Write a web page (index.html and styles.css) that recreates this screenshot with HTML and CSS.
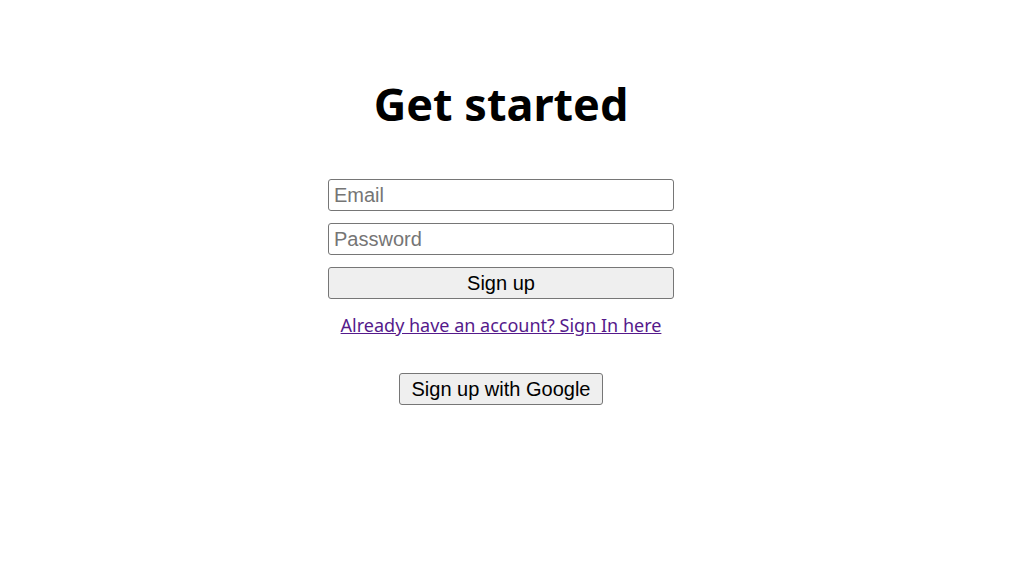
FILE: index.html
```html
<!DOCTYPE html>
<html>
<head>
<meta charset="utf-8">
<link rel="stylesheet" href="styles.css">
</head>
<body>
<main class="page">
  <h1 class="title">Get started</h1>
  <form class="form">
    <input class="field" type="email" placeholder="Email">
    <input class="field" type="password" placeholder="Password">
    <button class="btn btn-full" type="button">Sign up</button>
  </form>
  <a class="signin" href="#">Already have an account? Sign In here</a>
  <button class="btn btn-google" type="button">Sign up with Google</button>
</main>
</body>
</html>
```
FILE: styles.css
```css
html, body {
  margin: 0;
  padding: 0;
  background: #fff;
}
.page {
  display: flex;
  flex-direction: column;
  align-items: center;
  padding-right: 27px;
  font-family: "Noto Sans", "Open Sans", sans-serif;
}
.title {
  margin: 74px 0 0;
  font-size: 45px;
  font-weight: 700;
  line-height: 60px;
  color: #000;
}
.form {
  display: flex;
  flex-direction: column;
  gap: 12px;
  width: 346px;
  margin-top: 45px;
}
.field, .btn {
  box-sizing: border-box;
  height: 32px;
  font-family: "Liberation Sans", Arial, sans-serif;
  font-size: 20px;
  border: 1px solid #767676;
  border-radius: 3px;
  margin: 0;
}
.field {
  padding: 0 5px;
  background: #fff;
  color: #000;
}
.field::placeholder {
  color: #757575;
}
.btn {
  background: #efefef;
  color: #000;
  padding: 0 6px;
  white-space: nowrap;
}
.btn-full {
  width: 100%;
}
.signin {
  margin-top: 14px;
  font-size: 18px;
  line-height: 24px;
  color: #551a8b;
}
.btn-google {
  margin-top: 36px;
  width: 204px;
}
```
